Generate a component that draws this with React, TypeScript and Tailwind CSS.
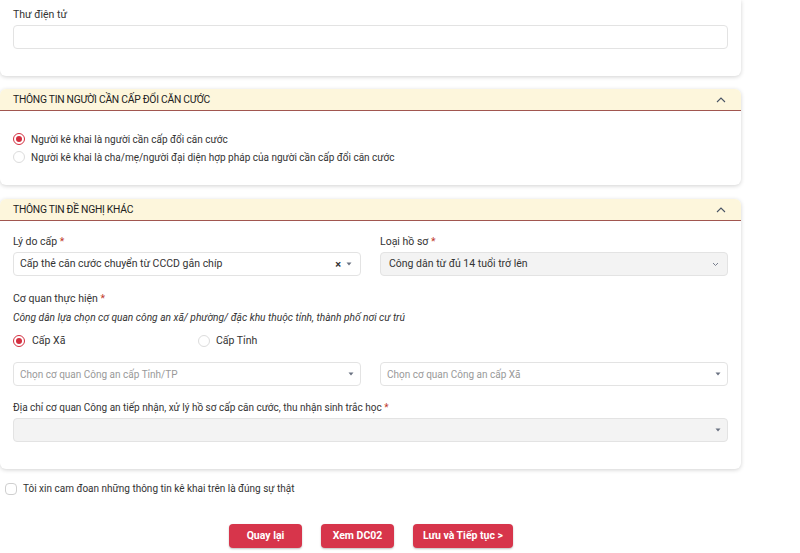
import React from 'react'

const font = { fontFamily: 'Roboto, "Noto Sans", Arial, sans-serif' }

function Chevron() {
  return (
    <svg width="10" height="6" viewBox="0 0 10 6" className="text-gray-600">
      <path d="M1 5 L5 1 L9 5" fill="none" stroke="currentColor" strokeWidth="1.1" />
    </svg>
  )
}

function Caret() {
  return (
    <svg width="6" height="4" viewBox="0 0 6 4" className="text-gray-500">
      <path d="M0.5 0.5 L5.5 0.5 L3 3.5 Z" fill="currentColor" />
    </svg>
  )
}

function Radio({ checked }: { checked?: boolean }) {
  return checked ? (
    <span className="flex h-[12px] w-[12px] items-center justify-center rounded-full border border-[#d32f3f] bg-white">
      <span className="h-[6px] w-[6px] rounded-full bg-[#d32f3f]" />
    </span>
  ) : (
    <span className="h-[12px] w-[12px] rounded-full border border-[#dcdcdc] bg-white" />
  )
}

function SectionHeader({ title }: { title: string }) {
  return (
    <div className="flex h-[22px] items-center justify-between rounded-t-md border-b border-[#a1564f] bg-[#fdf6dc] pl-[13px] pr-[15px]">
      <span className="text-[10.3px] tracking-tight text-[#222]">{title}</span>
      <Chevron />
    </div>
  )
}

function Req() {
  return <span className="text-[#c0392b]"> *</span>
}

export default function App() {
  return (
    <div className="min-h-[553px] bg-white text-[10px] text-[#333]" style={font}>
      <div className="w-[741px]">
        {/* thư điện tử */}
        <div className="rounded-b-md bg-white px-[13px] pt-[9px] pb-[27px] shadow-[0_1px_4px_rgba(0,0,0,0.18)]">
          <div className="mb-[4px] text-[10.5px] leading-[12px]">Thư điện tử</div>
          <div className="h-[24px] rounded-sm border border-[#e3e3e3] bg-white" />
        </div>

        {/* người cần cấp đổi */}
        <div className="mt-[13px] rounded-md bg-white shadow-[0_1px_4px_rgba(0,0,0,0.18)]">
          <SectionHeader title="THÔNG TIN NGƯỜI CẦN CẤP ĐỔI CĂN CƯỚC" />
          <div className="flex flex-col gap-[6px] px-[13px] pt-[22px] pb-[22px]">
            <label className="flex h-[12px] items-center gap-[6px]">
              <Radio checked />
              <span>Người kê khai là người cần cấp đổi căn cước</span>
            </label>
            <label className="flex h-[12px] items-center gap-[6px]">
              <Radio />
              <span>Người kê khai là cha/mẹ/người đại diện hợp pháp của người cần cấp đổi căn cước</span>
            </label>
          </div>
        </div>

        {/* đề nghị khác */}
        <div className="mt-[14px] rounded-md bg-white shadow-[0_1px_4px_rgba(0,0,0,0.18)]">
          <SectionHeader title="THÔNG TIN ĐỀ NGHỊ KHÁC" />
          <div className="px-[13px] pt-[14px] pb-[27px]">
            <div className="grid grid-cols-2 gap-x-[19px]">
              <div>
                <div className="mb-[4px] text-[10.5px] leading-[13px]">
                  Lý do cấp<Req />
                </div>
                <div className="flex h-[24px] items-center justify-between rounded-sm border border-[#e3e3e3] bg-white pl-[6px] pr-[8px] text-[10.5px]">
                  <span>Cấp thẻ căn cước chuyển từ CCCD gắn chíp</span>
                  <span className="flex items-center gap-[5px]">
                    <span className="text-[11px] font-bold leading-none text-[#333]">×</span>
                    <Caret />
                  </span>
                </div>
              </div>
              <div>
                <div className="mb-[4px] text-[10.5px] leading-[13px]">
                  Loại hồ sơ<Req />
                </div>
                <div className="flex h-[24px] items-center justify-between rounded-sm border border-[#e3e3e3] bg-[#f3f3f3] pl-[8px] pr-[8px] text-[10.5px]">
                  <span>Công dân từ đủ 14 tuổi trở lên</span>
                  <svg width="7" height="5" viewBox="0 0 7 5" className="text-gray-500">
                    <path d="M1 1 L3.5 3.5 L6 1" fill="none" stroke="currentColor" strokeWidth="0.9" />
                  </svg>
                </div>
              </div>
            </div>

            <div className="mt-[16px] text-[10.5px] leading-[13px]">
              Cơ quan thực hiện<Req />
            </div>
            <div className="mt-[6px] text-[10.2px] italic leading-[13px]">
              Công dân lựa chọn cơ quan công an xã/ phường/ đặc khu thuộc tỉnh, thành phố nơi cư trú
            </div>
            <div className="mt-[10px] flex h-[14px] items-center text-[10.5px]">
              <label className="flex w-[185px] items-center gap-[7px]">
                <Radio checked />
                <span>Cấp Xã</span>
              </label>
              <label className="flex items-center gap-[6px]">
                <Radio />
                <span>Cấp Tỉnh</span>
              </label>
            </div>

            <div className="mt-[14px] grid grid-cols-2 gap-x-[19px]">
              <div className="flex h-[24px] items-center justify-between rounded-sm border border-[#e3e3e3] bg-white pl-[6px] pr-[6px] text-[#999]">
                <span>Chọn cơ quan Công an cấp Tỉnh/TP</span>
                <Caret />
              </div>
              <div className="flex h-[24px] items-center justify-between rounded-sm border border-[#e3e3e3] bg-white pl-[6px] pr-[6px] text-[#999]">
                <span>Chọn cơ quan Công an cấp Xã</span>
                <Caret />
              </div>
            </div>

            <div className="mt-[15px] mb-[4px] leading-[13px]">
              Địa chỉ cơ quan Công an tiếp nhận, xử lý hồ sơ cấp căn cước, thu nhận sinh trắc học<Req />
            </div>
            <div className="flex h-[24px] items-center justify-end rounded-sm border border-[#e3e3e3] bg-[#f3f3f3] pr-[6px]">
              <Caret />
            </div>
          </div>
        </div>
      </div>

      <label className="mt-[12px] flex items-center gap-[6px] pl-[5px]">
        <span className="h-[12px] w-[12px] rounded-sm border border-[#cfcfcf] bg-white" />
        <span>Tôi xin cam đoan những thông tin kê khai trên là đúng sự thật</span>
      </label>

      <div className="mt-[28px] flex pl-[229px] text-[10.5px] font-bold text-white">
        <button className="h-[24px] w-[73px] rounded-sm bg-[#d7354b] shadow-[0_1px_2px_rgba(0,0,0,0.25)]">Quay lại</button>
        <button className="ml-[19px] h-[24px] w-[73px] rounded-sm bg-[#d7354b] shadow-[0_1px_2px_rgba(0,0,0,0.25)]">Xem DC02</button>
        <button className="ml-[19px] h-[24px] w-[100px] rounded-sm bg-[#d7354b] shadow-[0_1px_2px_rgba(0,0,0,0.25)]">Lưu và Tiếp tục &gt;</button>
      </div>
    </div>
  )
}
